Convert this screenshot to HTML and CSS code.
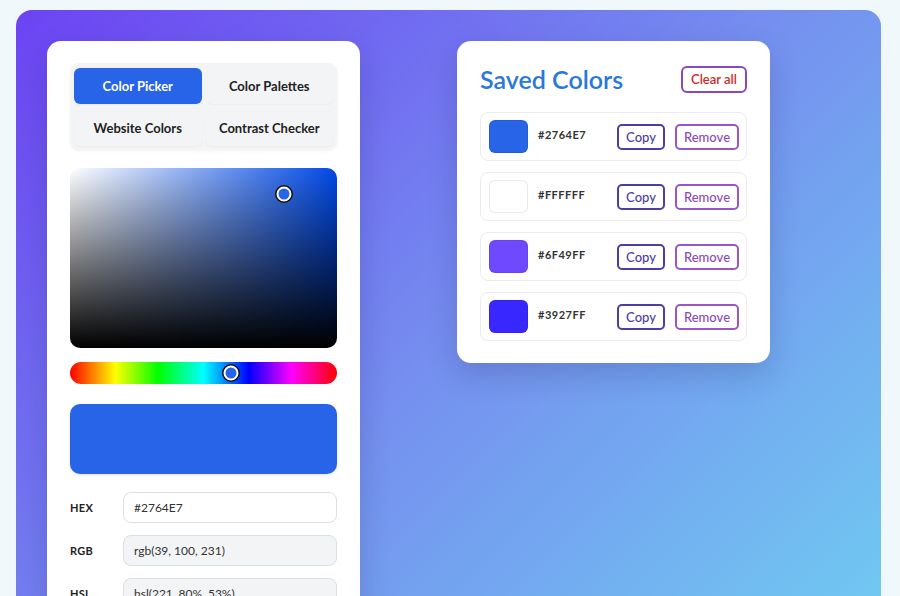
FILE: index.html
```html
<!DOCTYPE html>
<html lang="en">
<head>
<meta charset="utf-8">
<title>Color Tools</title>
<link rel="stylesheet" href="styles.css">
</head>
<body>
<main class="stage">
  <section class="card picker-card">
    <nav class="tabs">
      <button class="tab active">Color Picker</button>
      <button class="tab">Color Palettes</button>
      <button class="tab">Website Colors</button>
      <button class="tab">Contrast Checker</button>
    </nav>

    <div class="sv-area">
      <span class="knob sv-knob"></span>
    </div>

    <div class="hue-bar">
      <span class="knob hue-knob"></span>
    </div>

    <div class="preview"></div>

    <div class="fields">
      <label class="field-label">HEX</label>
      <input class="field" type="text" value="#2764E7">
      <label class="field-label">RGB</label>
      <input class="field readonly" type="text" value="rgb(39, 100, 231)" readonly>
      <label class="field-label">HSL</label>
      <input class="field readonly" type="text" value="hsl(221, 80%, 53%)" readonly>
    </div>
  </section>

  <section class="card saved-card">
    <header class="saved-head">
      <h2 class="saved-title">Saved Colors</h2>
      <button class="clear-btn">Clear all</button>
    </header>
    <ul class="saved-list">
      <li class="saved-row">
        <span class="swatch" style="background:#2764E7"></span>
        <span class="hex">#2764E7</span>
        <button class="btn copy">Copy</button>
        <button class="btn remove">Remove</button>
      </li>
      <li class="saved-row">
        <span class="swatch" style="background:#FFFFFF"></span>
        <span class="hex">#FFFFFF</span>
        <button class="btn copy">Copy</button>
        <button class="btn remove">Remove</button>
      </li>
      <li class="saved-row">
        <span class="swatch" style="background:#6F49FF"></span>
        <span class="hex">#6F49FF</span>
        <button class="btn copy">Copy</button>
        <button class="btn remove">Remove</button>
      </li>
      <li class="saved-row">
        <span class="swatch" style="background:#3927FF"></span>
        <span class="hex">#3927FF</span>
        <button class="btn copy">Copy</button>
        <button class="btn remove">Remove</button>
      </li>
    </ul>
  </section>
</main>
</body>
</html>
```

FILE: styles.css
```css
* { box-sizing: border-box; }

html, body {
  margin: 0;
  padding: 0;
  background: #f1f8fc;
  font-family: "Lato", "Noto Sans", "Liberation Sans", sans-serif;
  color: #222;
}

body {
  padding: 10px 19px 0 16px;
}

.stage {
  display: flex;
  align-items: flex-start;
  gap: 97px;
  min-height: 760px;
  padding: 31px;
  border-radius: 16px;
  background: linear-gradient(135deg, #6c43f3 0%, #7590ef 48%, #6fd6f2 100%);
}

.card {
  width: 313px;
  background: #fff;
  border-radius: 14px;
  padding: 22px 23px;
  box-shadow: 0 12px 30px rgba(20, 20, 80, 0.18);
}

/* Tabs */
.tabs {
  display: grid;
  grid-template-columns: 1fr 1fr;
  gap: 6px 4px;
  padding: 5px 4px 4px;
  background: #f3f4f6;
  border-radius: 9px;
  box-shadow: 0 1px 3px rgba(0, 0, 0, 0.06);
}

.tab {
  height: 36px;
  border: 0;
  border-radius: 6px;
  background: #f3f4f6;
  font-family: inherit;
  font-size: 13px;
  font-weight: 700;
  color: #222;
  box-shadow: 0 1px 2px rgba(0, 0, 0, 0.04);
}

.tab.active {
  background: #2764e7;
  color: #fff;
}

/* Saturation / value area */
.sv-area {
  position: relative;
  margin-top: 18px;
  height: 180px;
  border-radius: 10px;
  background:
    linear-gradient(to bottom, rgba(0, 0, 0, 0), #000),
    linear-gradient(to right, #fff, rgba(255, 255, 255, 0)),
    hsl(221, 100%, 45%);
}

.knob {
  position: absolute;
  width: 15px;
  height: 15px;
  border-radius: 50%;
  border: 2px solid #fff;
  box-shadow: 0 0 0 1.5px #111;
  background: #2764e7;
  transform: translate(-50%, -50%);
}

.sv-knob { left: 214px; top: 26px; }

.hue-bar {
  position: relative;
  margin-top: 14px;
  height: 22px;
  border-radius: 11px;
  background: linear-gradient(to right,
    #ff0000 0%, #ffff00 17%, #00ff00 33%, #00ffff 50%,
    #0000ff 67%, #ff00ff 83%, #ff0000 100%);
}

.hue-knob { left: 161px; top: 11px; }

.preview {
  margin-top: 20px;
  height: 70px;
  border-radius: 10px;
  background: #2764e7;
  box-shadow: 0 1px 3px rgba(0, 0, 0, 0.12);
}

.fields {
  margin-top: 18px;
  display: grid;
  grid-template-columns: 53px 1fr;
  row-gap: 12px;
  align-items: center;
}

.field-label {
  font-size: 11px;
  font-weight: 700;
  color: #222;
  letter-spacing: 0.3px;
}

.field {
  height: 31px;
  width: 100%;
  border: 1px solid #dcdfe3;
  border-radius: 8px;
  padding: 0 10px;
  font-family: inherit;
  font-size: 12px;
  color: #333;
  background: #fff;
}

.field.readonly { background: #f3f4f6; }

/* Saved colors */
.saved-card {
  padding: 23px 23px 22px;
}

.saved-head {
  display: flex;
  align-items: center;
  justify-content: space-between;
  margin-bottom: 18px;
}

.saved-title {
  margin: 0;
  font-size: 25px;
  font-weight: 600;
  color: #2a78d9;
}

.clear-btn {
  height: 27px;
  width: 66px;
  border: 2px solid #8a48bb;
  border-radius: 6px;
  background: #fff;
  font-family: inherit;
  font-size: 13px;
  font-weight: 600;
  color: #d02a2a;
}

.saved-list {
  list-style: none;
  margin: 0;
  padding: 0;
  display: flex;
  flex-direction: column;
  gap: 11px;
}

.saved-row {
  display: flex;
  align-items: center;
  height: 49px;
  padding: 0 7px 0 8px;
  border: 1px solid #ececef;
  border-radius: 8px;
}

.swatch {
  width: 39px;
  height: 33px;
  border-radius: 6px;
  border: 1px solid rgba(0, 0, 0, 0.08);
}

.hex {
  margin-left: 10px;
  flex: 1;
  font-size: 11px;
  font-weight: 700;
  letter-spacing: 0.5px;
  color: #333;
  padding-bottom: 4px;
}

.btn {
  height: 26px;
  border-radius: 5px;
  background: #fff;
  font-family: inherit;
  font-size: 13px;
  font-weight: 500;
}

.btn.copy {
  width: 48px;
  border: 2px solid #4b3ea5;
  color: #4b3ea5;
}

.btn.remove {
  width: 64px;
  margin-left: 10px;
  border: 2px solid #9a55c6;
  color: #8c4cb9;
}
```
